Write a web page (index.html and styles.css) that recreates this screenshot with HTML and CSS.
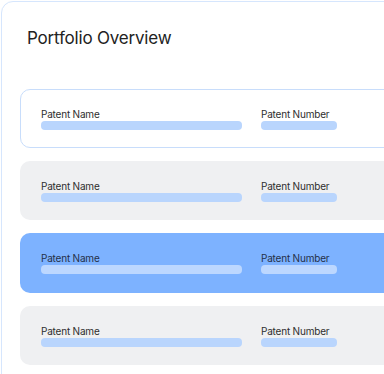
FILE: index.html
```html
<!DOCTYPE html>
<html>
<head>
<meta charset="utf-8">
<link rel="stylesheet" href="styles.css">
</head>
<body>
<div class="viewport">
<div class="card">
  <h1 class="title">Portfolio Overview</h1>
  <div class="rows">
    <div class="row row-outline">
      <div class="field field-name"><span class="label">Patent Name</span><span class="bar"></span></div>
      <div class="field field-number"><span class="label">Patent Number</span><span class="bar"></span></div>
    </div>
    <div class="row row-gray">
      <div class="field field-name"><span class="label">Patent Name</span><span class="bar"></span></div>
      <div class="field field-number"><span class="label">Patent Number</span><span class="bar"></span></div>
    </div>
    <div class="row row-blue">
      <div class="field field-name"><span class="label">Patent Name</span><span class="bar"></span></div>
      <div class="field field-number"><span class="label">Patent Number</span><span class="bar"></span></div>
    </div>
    <div class="row row-gray">
      <div class="field field-name"><span class="label">Patent Name</span><span class="bar"></span></div>
      <div class="field field-number"><span class="label">Patent Number</span><span class="bar"></span></div>
    </div>
  </div>
</div>
</div>
</body>
</html>
```

FILE: styles.css
```css
html, body {
  margin: 0;
  padding: 0;
  background: #ffffff;
}
body {
  font-family: Inter, "Noto Sans", sans-serif;
  color: #2b2b2b;
}
.viewport {
  width: 384px;
  height: 374px;
  overflow: hidden;
}
.card {
  margin: 1px 0 0 1px;
  width: 440px;
  height: 440px;
  border: 1px solid #d6e6fd;
  border-radius: 12px;
  padding: 0 0 0 18px;
  box-sizing: border-box;
}
.title {
  margin: 0;
  padding: 25px 0 0 7px;
  font-size: 17px;
  font-weight: 400;
  line-height: 22px;
  color: #222222;
  letter-spacing: -0.2px;
}
.rows {
  margin-top: 40px;
  display: flex;
  flex-direction: column;
  gap: 13px;
}
.row {
  height: 59px;
  box-sizing: border-box;
  border-radius: 10px;
  display: flex;
  gap: 19px;
  padding: 20px 0 0 21px;
}
.row-outline {
  border: 1px solid #c8ddfb;
  padding: 19px 0 0 20px;
}
.row-gray {
  background: #eff0f2;
}
.row-blue {
  background: #7db2ff;
  height: 60px;
}
.field {
  display: flex;
  flex-direction: column;
  gap: 2px;
}
.field-name { width: 201px; }
.field-number { width: 76px; }
.label {
  font-size: 10px;
  line-height: 10px;
  color: #2e2e2e;
  white-space: nowrap;
  letter-spacing: -0.2px;
}
.bar {
  display: block;
  height: 9px;
  border-radius: 4px;
  background: #b9d5fd;
}
.row-blue .bar {
  background: #bcd7ff;
}
.row-blue .label {
  color: #253048;
}
```
